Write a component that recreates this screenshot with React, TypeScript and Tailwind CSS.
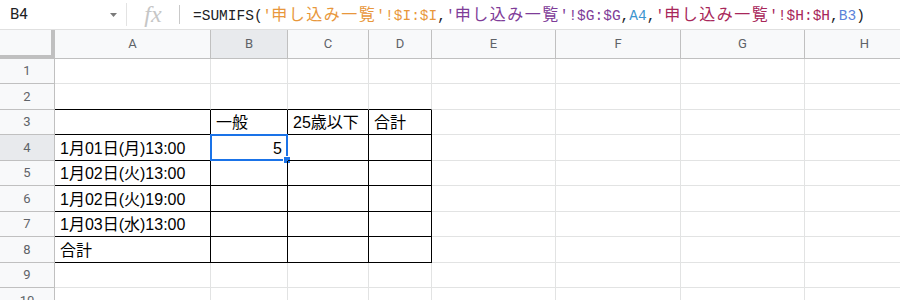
import React from "react";

const cols = [
  { key: "A", w: "w-[156px]" },
  { key: "B", w: "w-[77px]" },
  { key: "C", w: "w-[81px]" },
  { key: "D", w: "w-[63px]" },
  { key: "E", w: "w-[124px]" },
  { key: "F", w: "w-[125px]" },
  { key: "G", w: "w-[124px]" },
  { key: "H", w: "w-[120px]" },
];

const rowHeights: Record<number, string> = {
  1: "h-[25px]",
  2: "h-[26px]",
  3: "h-[25px]",
  4: "h-[26px]",
  5: "h-[25px]",
  6: "h-[26px]",
  7: "h-[25px]",
  8: "h-[26px]",
  9: "h-[25px]",
  10: "h-[26px]",
};

const data: Record<number, Record<string, string>> = {
  3: { B: "一般", C: "25歳以下", D: "合計" },
  4: { A: "1月01日(月)13:00", B: "5" },
  5: { A: "1月02日(火)13:00" },
  6: { A: "1月02日(火)19:00" },
  7: { A: "1月03日(水)13:00" },
  8: { A: "合計" },
};

const tableCols = ["A", "B", "C", "D"];

function Cjk({ children }: { children: React.ReactNode }) {
  return (
    <span className="font-['Noto_Sans_CJK_JP',sans-serif] text-[16px] tracking-[1.5px]">
      {children}
    </span>
  );
}

function Cell({ row, col, w }: { row: number; col: string; w: string }) {
  const inTable = row >= 3 && row <= 8 && tableCols.includes(col);
  const bottomBlack = inTable || (row === 2 && tableCols.includes(col));
  const rightCls = inTable ? "border-r-black" : "border-r-[#e2e3e3]";
  const bottomCls = bottomBlack ? "border-b-black" : "border-b-[#e2e3e3]";
  const text = data[row]?.[col] ?? "";
  const isNum = /^\d+$/.test(text);
  const selected = row === 4 && col === "B";
  return (
    <div
      className={`relative shrink-0 ${w} h-full border-r border-b ${rightCls} ${bottomCls} flex items-end pb-[2px] px-[5px] ${
        isNum ? "justify-end" : "justify-start"
      }`}
    >
      <span className="leading-[18px] text-[16px] text-black whitespace-nowrap font-['Liberation_Sans','Noto_Sans_CJK_JP',sans-serif]">
        {text}
      </span>
      {selected && (
        <div className="absolute -left-[1px] -top-[1px] -right-[1px] -bottom-[1px] border-2 border-[#1a73e8] pointer-events-none">
          <div className="absolute -right-[5px] -bottom-[5px] w-[8px] h-[8px] bg-[#1a73e8] border border-white" />
        </div>
      )}
    </div>
  );
}

export default function App() {
  const rows = [1, 2, 3, 4, 5, 6, 7, 8, 9, 10];
  return (
    <div className="w-[900px] h-[300px] overflow-hidden bg-white font-['Liberation_Sans','Noto_Sans_CJK_JP',sans-serif]">
      {/* Formula bar */}
      <div className="h-[30px] flex items-center border-b border-[#e0e0e0] bg-white">
        <div className="w-[126px] shrink-0 h-full flex items-center justify-between pl-[10px] pr-[9px]">
          <span className="text-[15px] text-[#202124] font-['Roboto',sans-serif]">B4</span>
          <svg width="7" height="4" viewBox="0 0 7 4">
            <path d="M0 0 L7 0 L3.5 4 Z" fill="#7a7a7a" />
          </svg>
        </div>
        <div className="w-px h-[23px] bg-[#e3e3e3] shrink-0" />
        <div className="w-[52px] shrink-0 h-full flex items-center justify-center">
          <span className="font-['Liberation_Serif',serif] italic text-[24px] leading-none text-[#c6c6c6] -mt-[2px]">fx</span>
        </div>
        <div className="w-px h-[19px] bg-[#c9c9c9] shrink-0" />
        <div className="pl-[13px] whitespace-nowrap font-['Liberation_Mono','Noto_Sans_CJK_JP',monospace] text-[14.5px] leading-none text-[#202124]">
          <span>=SUMIFS(</span>
          <span className="text-[#e8973c]">
            '<Cjk>申し込み一覧</Cjk>'!$I:$I
          </span>
          <span>,</span>
          <span className="text-[#7e3c98]">
            '<Cjk>申し込み一覧</Cjk>'!$G:$G
          </span>
          <span>,</span>
          <span className="text-[#3d95cf]">A4</span>
          <span>,</span>
          <span className="text-[#a8265a]">
            '<Cjk>申し込み一覧</Cjk>'!$H:$H
          </span>
          <span>,</span>
          <span className="text-[#5b82d9]">B3</span>
          <span>)</span>
        </div>
      </div>

      {/* Column header row */}
      <div className="flex h-[29px] bg-[#f8f9fa] font-['Roboto','Liberation_Sans',sans-serif] text-[13px] text-[#5f6368]">
        <div className="w-[55px] shrink-0 h-full border-r-[4px] border-b-[4px] border-[#c0c0c0] bg-[#f8f9fa]" />
        {cols.map((c) => (
          <div
            key={c.key}
            className={`${c.w} shrink-0 h-full flex items-center justify-center border-r border-b border-r-[#c0c0c0] border-b-[#c0c0c0] ${
              c.key === "B" ? "bg-[#e8eaed]" : "bg-[#f8f9fa]"
            }`}
          >
            {c.key}
          </div>
        ))}
      </div>

      {/* Rows */}
      {rows.map((r) => (
        <div key={r} className={`flex ${rowHeights[r]}`}>
          <div
            className={`w-[55px] shrink-0 h-full flex items-center justify-center border-r border-b border-[#c0c0c0] font-['Roboto','Liberation_Sans',sans-serif] text-[13px] text-[#5f6368] ${
              r === 4 ? "bg-[#e8eaed]" : "bg-[#f8f9fa]"
            }`}
          >
            {r}
          </div>
          {cols.map((c) => (
            <Cell key={c.key} row={r} col={c.key} w={c.w} />
          ))}
        </div>
      ))}
    </div>
  );
}
